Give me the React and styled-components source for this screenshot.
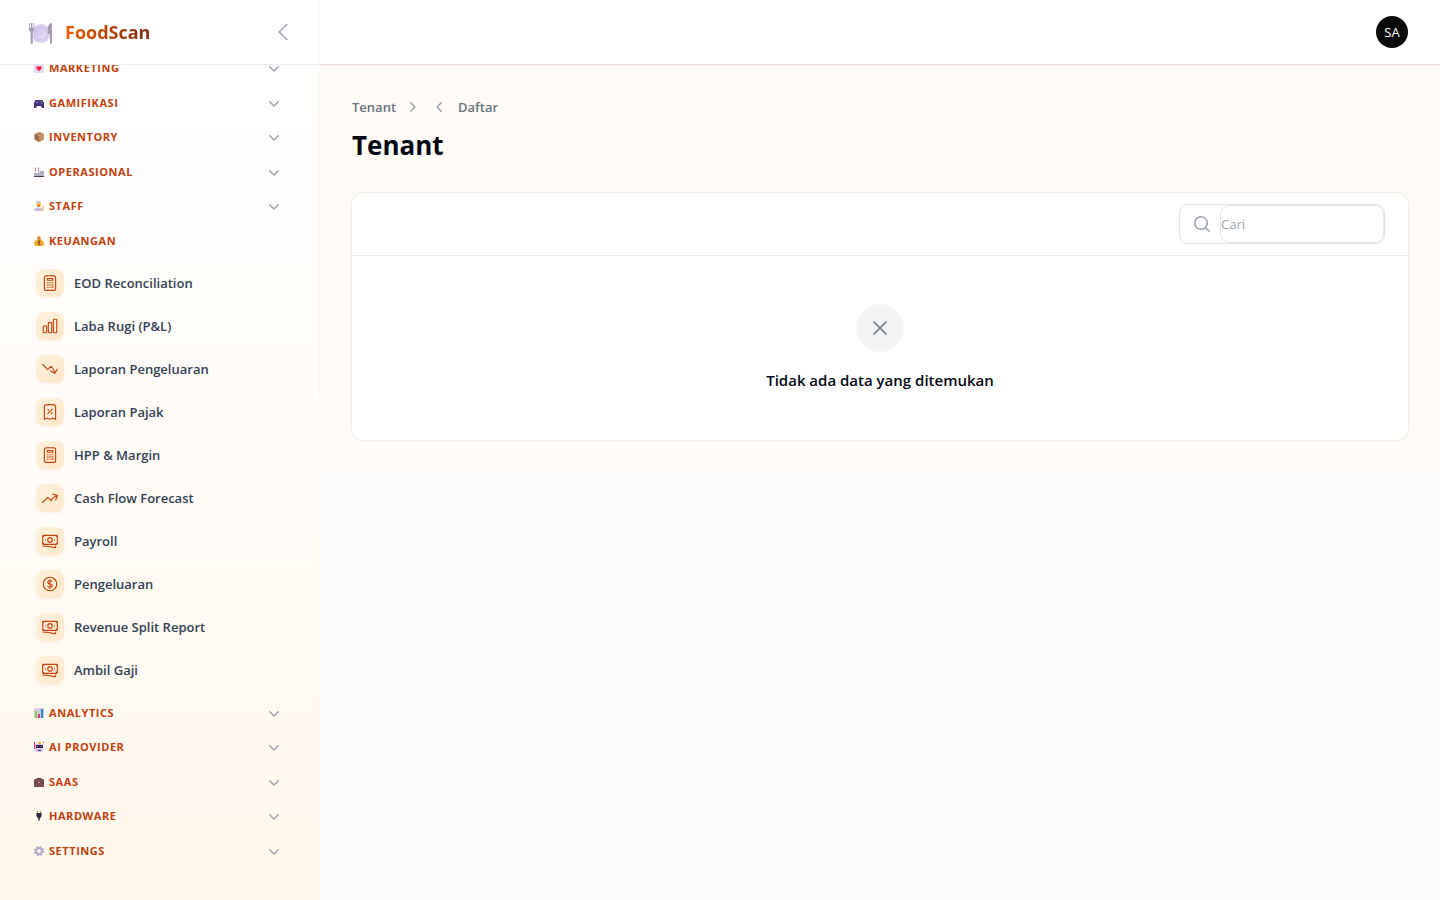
import React from "react";
import styled, { createGlobalStyle } from "styled-components";
import {
  HiOutlineCalculator,
  HiOutlineChartBar,
  HiOutlineArrowTrendingDown,
  HiOutlineArrowTrendingUp,
  HiOutlineReceiptPercent,
  HiOutlineBanknotes,
  HiOutlineCurrencyDollar,
  HiOutlineChevronLeft,
  HiOutlineXMark,
  HiMiniChevronDown,
  HiMiniChevronLeft,
  HiMiniChevronRight,
  HiMiniMagnifyingGlass,
} from "react-icons/hi2";

const GlobalStyle = createGlobalStyle`
  *, *::before, *::after { box-sizing: border-box; }
  body {
    margin: 0;
    background: #f9fafc;
    color: #030712;
    font-family: "Open Sans", "Noto Sans", sans-serif;
    font-size: 14px;
    line-height: 20px;
  }
  button, input { font: inherit; color: inherit; }
  button { padding: 0; border: 0; background: none; cursor: pointer; }
  a { color: inherit; text-decoration: none; }
  h1, p { margin: 0; }
  ul, ol { margin: 0; padding: 0; list-style: none; }
  svg { display: block; flex: none; }
`;

const Shell = styled.div`
  display: flex;
  min-height: 100vh;
`;

const Sidebar = styled.aside`
  display: flex;
  flex-direction: column;
  flex: 0 0 320px;
  height: 100vh;
  overflow: hidden;
  background: linear-gradient(180deg, #ffffff 0%, #fffcf8 50%, #fff7eb 100%);
  border-right: 1px solid #fff7ed;
`;

const SidebarHeader = styled.header`
  position: relative;
  z-index: 1;
  display: flex;
  align-items: center;
  justify-content: space-between;
  flex: 0 0 64px;
  padding: 0 24px 0 28px;
  background: #ffffff;
  box-shadow: 0 0 0 1px #ececee, 0 1px 2px rgba(0, 0, 0, 0.05);
`;

const Brand = styled.a`
  display: flex;
  align-items: center;
  gap: 11px;
`;

const BrandName = styled.span`
  font-size: 18px;
  line-height: 28px;
  font-weight: 700;
  color: transparent;
  background: linear-gradient(90deg, #f55a00, #7c2d12);
  background-clip: text;
`;

const CollapseButton = styled.button`
  color: #9ca3af;
`;

const Nav = styled.nav`
  margin-top: -6px;
  padding: 0 32px;
`;

const Group = styled.section`
  margin-bottom: ${(p) => (p.$tight ? 14 : 15)}px;
`;

const GroupToggle = styled.button`
  display: flex;
  align-items: center;
  gap: 4px;
  width: 100%;
  height: 20px;
  padding: 0 3px 0 1px;
  color: #c2410c;
  font-size: 11px;
  line-height: 20px;
  font-weight: 700;
  letter-spacing: 0.05em;
  text-transform: uppercase;

  > span {
    flex: 1;
    text-align: left;
  }
  > svg:last-child {
    color: #9ca3af;
  }
`;

const ItemList = styled.ul`
  display: grid;
  gap: 7px;
  margin-top: 14px;
`;

const ItemLink = styled.a`
  display: flex;
  align-items: center;
  gap: 10px;
  height: 36px;
  padding: 0 4px;
  color: #334155;
  font-size: 13px;
  font-weight: 600;
`;

const ItemIcon = styled.span`
  display: grid;
  place-items: center;
  width: 28px;
  height: 28px;
  border-radius: 8px;
  color: #c2410c;
  background: linear-gradient(135deg, #fff1dc, #ffe8cc);
  box-shadow: 0 1px 3px rgba(234, 88, 12, 0.08);
`;

const Page = styled.div`
  flex: 1;
  min-width: 0;
`;

const Topbar = styled.header`
  position: relative;
  display: flex;
  align-items: center;
  justify-content: flex-end;
  height: 64px;
  padding: 0 32px;
  background: #ffffff;
  box-shadow: 0 1px 0 #ecdcd2, 0 2px 0 #fbf3ec;
`;

const Avatar = styled.button`
  width: 32px;
  height: 32px;
  border-radius: 50%;
  background: #09090b;
  color: #ffffff;
  font-size: 13px;
`;

const Main = styled.main`
  padding: 33px 32px 32px;
  background: #fffcf7;
`;

const Breadcrumbs = styled.ol`
  display: flex;
  align-items: center;
  gap: 8px;
  color: #6b7280;
  font-size: 13px;
  font-weight: 600;

  li {
    display: flex;
    align-items: center;
  }
  li:first-child {
    gap: 6px;
  }
  li:last-child {
    gap: 8px;
  }
  svg {
    color: #9ca3af;
  }
`;

const Title = styled.h1`
  margin-top: 10px;
  font-size: 26px;
  line-height: 36px;
  font-weight: 700;
`;

const Card = styled.section`
  margin-top: 30px;
  border-radius: 12px;
  background: #ffffff;
  box-shadow: 0 0 0 1px #f0ede9, 0 1px 2px rgba(0, 0, 0, 0.08);
`;

const Toolbar = styled.div`
  display: flex;
  justify-content: flex-end;
  padding: 11px 23px;
  border-bottom: 1px solid #e8e9eb;
`;

const SearchBox = styled.label`
  display: flex;
  align-items: center;
  width: 206px;
  height: 40px;
  border: 1px solid #e2e4e8;
  border-radius: 9px;
  color: #9ca3af;

  svg {
    margin: 0 8px 0 12px;
  }
`;

const SearchInput = styled.input`
  flex: 1;
  min-width: 0;
  height: 38px;
  padding: 0;
  border: 1px solid #e2e8f0;
  border-radius: 9px;
  background: #ffffff;
  color: #030712;
  font-size: 13px;

  &::placeholder {
    color: #9ca3af;
    opacity: 1;
  }
`;

const EmptyState = styled.div`
  display: flex;
  flex-direction: column;
  align-items: center;
  gap: 16px;
  padding: 48px 24px;
`;

const EmptyIcon = styled.span`
  display: grid;
  place-items: center;
  width: 48px;
  height: 48px;
  border-radius: 50%;
  background: #f3f4f6;
  color: #6b7280;
`;

const EmptyText = styled.p`
  font-size: 15px;
  line-height: 24px;
  font-weight: 600;
`;

const Emoji = ({ children }) => (
  <svg width="12" height="12" viewBox="0 0 12 12" aria-hidden="true">
    {children}
  </svg>
);

const emojis = {
  letter: (
    <Emoji>
      <rect x="1" y="2" width="10" height="9" rx="1" fill="#e3d9f3" />
      <path d="M6 9.2 3.4 6.4C2.6 5 4.6 3.2 6 4.8 7.4 3.2 9.4 5 8.6 6.4Z" fill="#f8234f" />
    </Emoji>
  ),
  gamepad: (
    <Emoji>
      <path d="M2.5 3h7L11 6v5H9L8 9H4l-1 2H1V6Z" fill="#483277" />
      <path d="M3 5h2v1H3z" fill="#8c8bd8" />
      <circle cx="8" cy="4.6" r=".7" fill="#d3a64c" />
      <circle cx="9" cy="6.4" r=".7" fill="#3484e0" />
    </Emoji>
  ),
  box: (
    <Emoji>
      <path d="m6 1 4.6 2v5.5L6 11 1.4 8.5V3Z" fill="#a56d4c" />
      <path d="m6 1 4.6 2L6 5.4 1.4 3Z" fill="#d6a06f" />
      <path d="M6 5.4 10.6 3v5.5L6 11Z" fill="#c18a61" />
      <path d="m3 3.9 4.7-2.2 1 .5L4 4.5v2L3 6Z" fill="#7c5748" />
    </Emoji>
  ),
  factory: (
    <Emoji>
      <path d="M1 7h5.5V5H11v5H1Z" fill="#b7b0c9" />
      <path d="M2 1h1v6H2zM5 1h1v6H5z" fill="#cfc2da" />
      <path d="M2 2h1v1H2zM2 4h1v1H2zM5 2h1v1H5zM5 4h1v1H5z" fill="#e8527b" />
      <path d="M1 10h10v1H1z" fill="#453454" />
    </Emoji>
  ),
  cook: (
    <Emoji>
      <path d="M3 1h5l-.6 3H3.6Z" fill="#cfc3e8" />
      <circle cx="5.8" cy="5" r="2.3" fill="#ffbd35" />
      <path d="M4.8 5h2v1.3h-2z" fill="#e8423f" />
      <path d="M1.4 11c0-3 2-3.6 4.2-3.6S9.4 8.4 9.4 11Z" fill="#c5b6e2" />
      <path d="M9.4 6h1v5h-1z" fill="#ef9b28" />
    </Emoji>
  ),
  money: (
    <Emoji>
      <path d="M5 1h2l.6 1.4L7.2 4C9.6 5 11 7 11 8.8c0 1.6-1 2.2-2.4 2.2H3.4C2 11 1 10.4 1 8.8 1 7 2.4 5 4.8 4L4.4 2.4Z" fill="#f1a92f" />
      <path d="M4.4 3.6h3.2" stroke="#a85a24" strokeWidth=".8" />
      <path d="M7.2 5.8H5.8v3.8h1.6M5 7.6h2" stroke="#6e3c26" strokeWidth=".9" fill="none" />
    </Emoji>
  ),
  chart: (
    <Emoji>
      <rect x="1" y="1" width="10" height="10" rx="1" fill="#d5cee3" />
      <path d="M2 4h2v7H2z" fill="#80d64d" />
      <path d="M5 7h2v4H5z" fill="#ef2f67" />
      <path d="M8 2h2v9H8z" fill="#2389dc" />
    </Emoji>
  ),
  robot: (
    <Emoji>
      <path d="M2 3h8v7L9 11H3l-1-1Z" fill="#d6c9ed" />
      <path d="M3 4h7v3H3z" fill="#30204b" />
      <path d="M4 5h1v1H4zM8 5h1v1H8z" fill="#35b9ed" />
      <path d="M5 1h3v2H5z" fill="#f5b42b" />
      <path d="M1 1h1v7H1zM10 1h1v1h-1z" fill="#ed2455" />
      <path d="M5 9h3v1H5z" fill="#45305c" />
    </Emoji>
  ),
  briefcase: (
    <Emoji>
      <path d="M4 4V2.5h4V4" stroke="#553240" fill="none" />
      <rect x="1" y="3" width="10" height="8" rx=".8" fill="#7c4a53" />
      <path d="M1 6.5h10" stroke="#5a3340" strokeWidth=".7" />
      <path d="M5 6h2v1H5z" fill="#e1a36f" />
    </Emoji>
  ),
  plug: (
    <Emoji>
      <path d="M4.5 1v2.4M7.5 1v2.4" stroke="#b58550" strokeWidth="1" />
      <path d="M3.4 3h5.2v3L7.2 8v1H6.5v2H5.5V9L4.8 8 3.4 6Z" fill="#33283f" />
    </Emoji>
  ),
  gear: (
    <Emoji>
      <circle cx="6" cy="6" r="4.3" fill="none" stroke="#aaa0c2" strokeWidth="1.6" strokeDasharray="1.7 1.677" />
      <circle cx="6" cy="6" r="2.9" fill="none" stroke="#b6abcf" strokeWidth="2" />
    </Emoji>
  ),
};

const PlateLogo = () => (
  <svg width="26" height="24" viewBox="0 0 26 24" aria-hidden="true">
    <defs>
      <linearGradient id="plate" x1="0" y1="0" x2="1" y2="1">
        <stop offset="0" stopColor="#cdbcec" />
        <stop offset="1" stopColor="#ebe2f8" />
      </linearGradient>
    </defs>
    <circle cx="13" cy="13.5" r="9.5" fill="#ddd0f1" />
    <circle cx="13" cy="13.5" r="6.5" fill="url(#plate)" stroke="#cbbbe6" />
    <path d="M1 3v6c0 1.8.8 2.5 1.6 2.6V23c0 1.200 2.200 1.200 2.200 0V11.600C5.500 11.500 6.300 10.800 6.300 9V3H5.500v5H4.400V3H3v5H1.900V3Z" fill="#a79db2" />
    <path d="M24 3c-3 0-4.200 3-4.200 7v3c0 1 .8 1.300 2.200 1.300V23c0 1 2 1 2 0Z" fill="#a79db2" />
  </svg>
);

const financeItems = [
  ["EOD Reconciliation", HiOutlineCalculator],
  ["Laba Rugi (P&L)", HiOutlineChartBar],
  ["Laporan Pengeluaran", HiOutlineArrowTrendingDown],
  ["Laporan Pajak", HiOutlineReceiptPercent],
  ["HPP & Margin", HiOutlineCalculator],
  ["Cash Flow Forecast", HiOutlineArrowTrendingUp],
  ["Payroll", HiOutlineBanknotes],
  ["Pengeluaran", HiOutlineCurrencyDollar],
  ["Revenue Split Report", HiOutlineBanknotes],
  ["Ambil Gaji", HiOutlineBanknotes],
];

const groups = [
  { label: "Marketing", emoji: "letter" },
  { label: "Gamifikasi", emoji: "gamepad", tight: true },
  { label: "Inventory", emoji: "box" },
  { label: "Operasional", emoji: "factory", tight: true },
  { label: "Staff", emoji: "cook" },
  { label: "Keuangan", emoji: "money", items: financeItems },
  { label: "Analytics", emoji: "chart", tight: true },
  { label: "AI Provider", emoji: "robot" },
  { label: "SaaS", emoji: "briefcase", tight: true },
  { label: "Hardware", emoji: "plug" },
  { label: "Settings", emoji: "gear" },
];

const NavGroup = ({ label, emoji, tight, items }) => (
  <Group $tight={tight}>
    <GroupToggle type="button" aria-expanded={Boolean(items)}>
      {emojis[emoji]}
      <span>{label}</span>
      {!items && <HiMiniChevronDown size={20} />}
    </GroupToggle>
    {items && (
      <ItemList>
        {items.map(([name, Icon]) => (
          <li key={name}>
            <ItemLink href="#">
              <ItemIcon>
                <Icon size={18} />
              </ItemIcon>
              {name}
            </ItemLink>
          </li>
        ))}
      </ItemList>
    )}
  </Group>
);

export default function App() {
  return (
    <>
      <GlobalStyle />
      <Shell>
        <Sidebar>
          <SidebarHeader>
            <Brand href="#">
              <PlateLogo />
              <BrandName>FoodScan</BrandName>
            </Brand>
            <CollapseButton type="button" aria-label="Collapse sidebar">
              <HiOutlineChevronLeft size={24} />
            </CollapseButton>
          </SidebarHeader>
          <Nav>
            {groups.map((group) => (
              <NavGroup key={group.label} {...group} />
            ))}
          </Nav>
        </Sidebar>
        <Page>
          <Topbar>
            <Avatar type="button" aria-label="User menu">SA</Avatar>
          </Topbar>
          <Main>
            <nav aria-label="Breadcrumb">
              <Breadcrumbs>
                <li>
                  <a href="#">Tenant</a>
                  <HiMiniChevronRight size={20} />
                </li>
                <li>
                  <HiMiniChevronLeft size={20} />
                  <a href="#">Daftar</a>
                </li>
              </Breadcrumbs>
            </nav>
            <Title>Tenant</Title>
            <Card>
              <Toolbar>
                <SearchBox>
                  <HiMiniMagnifyingGlass size={20} />
                  <SearchInput type="search" placeholder="Cari" aria-label="Cari" />
                </SearchBox>
              </Toolbar>
              <EmptyState>
                <EmptyIcon>
                  <HiOutlineXMark size={24} />
                </EmptyIcon>
                <EmptyText>Tidak ada data yang ditemukan</EmptyText>
              </EmptyState>
            </Card>
          </Main>
        </Page>
      </Shell>
    </>
  );
}
